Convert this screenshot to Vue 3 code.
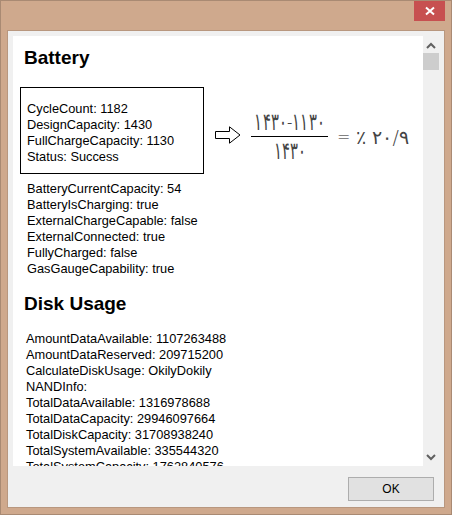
<script setup>
const battery = ['CycleCount: 1182', 'DesignCapacity: 1430', 'FullChargeCapacity: 1130', 'Status: Success'];
const batteryMore = [
  'BatteryCurrentCapacity: 54',
  'BatteryIsCharging: true',
  'ExternalChargeCapable: false',
  'ExternalConnected: true',
  'FullyCharged: false',
  'GasGaugeCapability: true',
];
const disk = [
  'AmountDataAvailable: 1107263488',
  'AmountDataReserved: 209715200',
  'CalculateDiskUsage: OkilyDokily',
  'NANDInfo:',
  'TotalDataAvailable: 1316978688',
  'TotalDataCapacity: 29946097664',
  'TotalDiskCapacity: 31708938240',
  'TotalSystemAvailable: 335544320',
  'TotalSystemCapacity: 1762840576',
];
</script>

<template>
  <div class="window">
    <div class="titlebar">
      <button class="close">
        <svg width="10" height="10" viewBox="0 0 10 10">
          <path d="M1 1.5 L9 8.5 M9 1.5 L1 8.5" stroke="#fff" stroke-width="2" />
        </svg>
      </button>
    </div>

    <div class="client">
      <div class="pane">
        <div class="content">
          <h2>Battery</h2>
          <div class="battery-row">
            <div class="box">
              <div v-for="line in battery" :key="line">{{ line }}</div>
            </div>
            <svg class="arrow" width="26" height="18" viewBox="0 0 26 18">
              <path d="M0.5 5.5 H14.5 V0.8 L25 9 L14.5 17.2 V12.5 H0.5 Z" fill="#fff" stroke="#000" />
            </svg>
            <div class="formula">
              <div class="fraction">
                <div class="num"><span>۱۴۳۰-۱۱۳۰</span></div>
                <div class="den"><span>۱۴۳۰</span></div>
              </div>
              <span class="eq">=</span>
              <span class="res">٪ ۲۰/۹</span>
            </div>
          </div>
          <div class="list">
            <div v-for="line in batteryMore" :key="line">{{ line }}</div>
          </div>
          <h2 class="second">Disk Usage</h2>
          <div class="list disk">
            <div v-for="line in disk" :key="line">{{ line }}</div>
          </div>
        </div>
        <div class="scrollbar">
          <svg width="10" height="7" viewBox="0 0 10 7">
            <path d="M1 6 L5 2 L9 6" fill="none" stroke="#606060" stroke-width="2" />
          </svg>
          <div class="thumb"></div>
          <svg class="down" width="10" height="7" viewBox="0 0 10 7">
            <path d="M1 1 L5 5 L9 1" fill="none" stroke="#606060" stroke-width="2" />
          </svg>
        </div>
      </div>
      <div class="footer">
        <button class="ok">OK</button>
      </div>
    </div>
  </div>
</template>

<style scoped>
.window {
  width: 452px;
  height: 515px;
  box-sizing: border-box;
  background: #cfa98d;
  border: 1px solid #a98a73;
  padding: 0 7px 7px;
  display: flex;
  flex-direction: column;
  font-family: "Liberation Sans", Arial, sans-serif;
  font-size: 12.8px;
  line-height: 16px;
  color: #000;
}
.titlebar {
  height: 30px;
  flex: none;
  display: flex;
  justify-content: flex-end;
  margin-right: -1px;
}
.close {
  width: 31px;
  height: 20px;
  margin: 0;
  padding: 0;
  border: none;
  background: #c75050;
  display: flex;
  align-items: center;
  justify-content: center;
}
.client {
  flex: 1;
  min-height: 0;
  background: #f0f0f0;
  padding: 5px 5px 0;
  display: flex;
  flex-direction: column;
  outline: 1px solid #b8977f;
}
.pane {
  height: 430px;
  flex: none;
  display: flex;
}
.content {
  width: 410px;
  background: #fff;
  overflow: hidden;
  padding: 0 0 0 7px;
  box-sizing: border-box;
}
h2 {
  margin: 11px 0 0 4px;
  font-size: 19px;
  line-height: 21px;
  font-weight: bold;
}
.second {
  margin-top: 16px;
}
.battery-row {
  display: flex;
  align-items: center;
  margin-top: 19px;
}
.box {
  width: 184px;
  height: 87px;
  box-sizing: border-box;
  border: 1px solid #000;
  padding: 13px 0 0 6px;
  flex: none;
}
.arrow {
  margin-left: 11px;
  margin-top: 8px;
  flex: none;
}
.formula {
  display: flex;
  align-items: center;
  margin-left: 10px;
  margin-top: 12px;
  font-family: "DejaVu Sans", sans-serif;
  font-weight: 200;
  color: #444;
}
.fraction {
  width: 77px;
  font-size: 20px;
  line-height: 24px;
  white-space: nowrap;
}
.num,
.den {
  display: flex;
  justify-content: center;
}
.num span,
.den span {
  flex: none;
  display: inline-block;
  transform: scale(0.74, 1.2);
}
.num {
  border-bottom: 1px solid #000;
  padding-bottom: 2px;
  direction: ltr;
}
.den {
  padding-top: 2px;
}
.eq {
  margin-left: 9px;
  font-size: 16px;
  color: #222;
}
.res {
  margin-left: 6px;
  font-size: 19px;
  letter-spacing: -0.8px;
  white-space: nowrap;
  unicode-bidi: plaintext;
}
.list {
  margin: 7px 0 0 7px;
}
.disk {
  margin-top: 17px;
  margin-left: 6px;
}
.scrollbar {
  width: 16px;
  flex: none;
  position: relative;
  display: flex;
  flex-direction: column;
  align-items: center;
  padding-top: 6px;
  box-sizing: border-box;
}
.thumb {
  width: 16px;
  height: 17px;
  margin-top: 4px;
  background: #cdcdcd;
}
.down {
  margin-top: auto;
  margin-bottom: 5px;
}
.footer {
  flex: 1;
  display: flex;
  justify-content: flex-end;
  align-items: flex-start;
  padding: 11px 5px 0 0;
}
.ok {
  width: 86px;
  height: 24px;
  box-sizing: border-box;
  border: 1px solid #adadad;
  background: #e1e1e1;
  font-family: "Liberation Sans", Arial, sans-serif;
  font-size: 12px;
  color: #000;
  padding: 0;
}
</style>
